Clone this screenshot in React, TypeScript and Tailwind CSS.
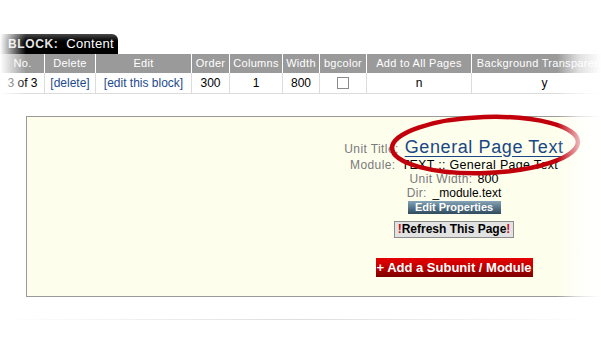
import React from 'react';

const cols = [
  { label: 'No.', w: 'w-[44px]' },
  { label: 'Delete', w: 'w-[51px]' },
  { label: 'Edit', w: 'w-[96px]' },
  { label: 'Order', w: 'w-[38px]' },
  { label: 'Columns', w: 'w-[53px]' },
  { label: 'Width', w: 'w-[37px]' },
  { label: 'bgcolor', w: 'w-[47px]' },
  { label: 'Add to All Pages', w: 'w-[105px]' },
  { label: 'Background Transparency', w: 'w-[146px]' },
];

export default function App() {
  return (
    <div className="relative w-[601px] h-[347px] overflow-hidden bg-white font-['Liberation_Sans',Arial,sans-serif]">
      <div className="pt-[34px] w-[900px]">
        {/* block tab */}
        <div className="flex items-center h-[20px] w-[118px] pl-[8px] gap-[8px] rounded-tr-[6px] bg-gradient-to-b from-[#4a4a4a] via-black to-black">
          <span className="text-[12px] font-bold text-[#e4e4e4] tracking-[0.6px]">BLOCK:</span>
          <span className="text-[13px] text-white tracking-[0.3px]">Content</span>
        </div>

        {/* block table */}
        <table className="table-fixed border-collapse text-center">
          <thead>
            <tr className="h-[19px] bg-[#9a9a9a]">
              {cols.map((c) => (
                <th
                  key={c.label}
                  className={`${c.w} p-0 border-x border-white text-[11px] font-normal text-white tracking-[0.3px] whitespace-nowrap`}
                >
                  {c.label}
                </th>
              ))}
            </tr>
          </thead>
          <tbody>
            <tr className="h-[20px] border-b border-[#dcdcdc] text-[12px] text-black">
              <td className="p-0 border-x border-[#dcdcdc]">3 of 3</td>
              <td className="p-0 border-x border-[#dcdcdc] text-[#1c4a8c]">[delete]</td>
              <td className="p-0 border-x border-[#dcdcdc] text-[#1c4a8c]">[edit this block]</td>
              <td className="p-0 border-x border-[#dcdcdc]">300</td>
              <td className="p-0 border-x border-[#dcdcdc]">1</td>
              <td className="p-0 border-x border-[#dcdcdc]">800</td>
              <td className="p-0 border-x border-[#dcdcdc]">
                <div className="mx-auto w-[12px] h-[12px] border border-[#8a8a8a] bg-white" />
              </td>
              <td className="p-0 border-x border-[#dcdcdc]">n</td>
              <td className="p-0 border-x border-[#dcdcdc]">y</td>
            </tr>
          </tbody>
        </table>

        {/* unit panel */}
        <div className="mt-[22px] ml-[26px] w-[856px] h-[181px] border border-[#9a9a9a] bg-[#fefeed] pt-[21px] flex flex-col items-center">
          <div className="flex items-baseline gap-[6px] leading-[18px]">
            <span className="text-[12px] text-[#7a7a7a] tracking-[0.4px]">Unit Title:</span>
            <a className="text-[18px] text-[#1a4786] underline underline-offset-[3px] tracking-[0.6px]">
              General Page Text
            </a>
          </div>
          <div className="flex items-baseline gap-[6px] leading-[14px]">
            <span className="text-[12px] text-[#7a7a7a] tracking-[0.4px]">Module:</span>
            <span className="text-[12.5px] text-black tracking-[0.3px]">TEXT :: General Page Text</span>
          </div>
          <div className="flex items-baseline gap-[5px] leading-[14px]">
            <span className="text-[12px] text-[#7a7a7a] tracking-[0.4px]">Unit Width:</span>
            <span className="text-[12.5px] text-black">800</span>
          </div>
          <div className="flex items-baseline gap-[6px] leading-[14px]">
            <span className="text-[12px] text-[#7a7a7a] tracking-[0.3px]">Dir:</span>
            <span className="text-[12px] text-black">_module.text</span>
          </div>
          <div className="mt-[1px] w-[93px] h-[13px] flex items-center justify-center bg-gradient-to-b from-[#86a4b8] to-[#2f4c5f] text-[11px] font-bold text-white leading-none">
            Edit Properties
          </div>
          <div className="mt-[7px] h-[17px] px-[3px] flex items-center justify-center whitespace-nowrap border border-[#8c8c8c] bg-[#e2e2e2] text-[12px] font-bold text-black leading-none">
            <span>
              <span className="text-[#c8101a]">!</span>Refresh This Page<span className="text-[#c8101a]">!</span>
            </span>
          </div>
          <div className="mt-[20px] w-[157px] h-[19px] flex items-center justify-center whitespace-nowrap bg-gradient-to-b from-[#e60000] via-[#c00000] to-[#7a0000] text-[13px] font-bold text-white leading-none">
            + Add a Subunit / Module
          </div>
        </div>

        <div className="mt-[22px] h-px w-[601px] bg-gradient-to-r from-white via-[#dedede] to-white" />
      </div>

      {/* highlight ellipse */}
      <svg className="absolute left-[388px] top-[110px]" width="200" height="70" viewBox="0 0 200 70">
        <ellipse cx="97" cy="35" rx="93" ry="28" fill="none" stroke="#c2000c" strokeWidth="4.5" transform="rotate(-2 97 35)" />
      </svg>

      {/* screenshot edge fades */}
      <div className="absolute inset-y-0 left-0 w-[26px] bg-gradient-to-r from-white to-transparent" />
      <div className="absolute inset-y-0 right-0 w-[44px] bg-gradient-to-l from-white via-white/70 to-transparent" />
    </div>
  );
}
